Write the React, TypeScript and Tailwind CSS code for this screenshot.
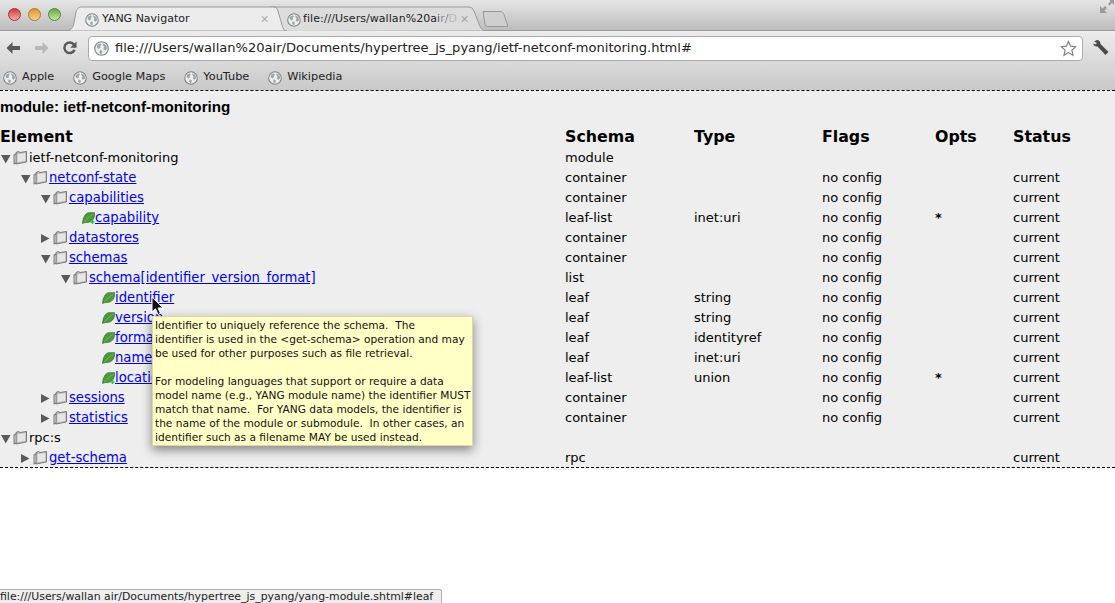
import React from 'react';

type Row = {
    name: string;
    level: number;
    kind: 'open' | 'closed' | 'leaf' | 'leaflist';
    link?: boolean;
    schema?: string;
    type?: string;
    flags?: string;
    opts?: string;
    status?: string;
};

const rows: Row[] = [
    { name: 'ietf-netconf-monitoring', level: 0, kind: 'open', schema: 'module' },
    { name: 'netconf-state', level: 1, kind: 'open', link: true, schema: 'container', flags: 'no config', status: 'current' },
    { name: 'capabilities', level: 2, kind: 'open', link: true, schema: 'container', flags: 'no config', status: 'current' },
    { name: 'capability', level: 3, kind: 'leaflist', link: true, schema: 'leaf-list', type: 'inet:uri', flags: 'no config', opts: '*', status: 'current' },
    { name: 'datastores', level: 2, kind: 'closed', link: true, schema: 'container', flags: 'no config', status: 'current' },
    { name: 'schemas', level: 2, kind: 'open', link: true, schema: 'container', flags: 'no config', status: 'current' },
    { name: 'schema[identifier version format]', level: 3, kind: 'open', link: true, schema: 'list', flags: 'no config', status: 'current' },
    { name: 'identifier', level: 4, kind: 'leaf', link: true, schema: 'leaf', type: 'string', flags: 'no config', status: 'current' },
    { name: 'version', level: 4, kind: 'leaf', link: true, schema: 'leaf', type: 'string', flags: 'no config', status: 'current' },
    { name: 'format', level: 4, kind: 'leaf', link: true, schema: 'leaf', type: 'identityref', flags: 'no config', status: 'current' },
    { name: 'namespace', level: 4, kind: 'leaf', link: true, schema: 'leaf', type: 'inet:uri', flags: 'no config', status: 'current' },
    { name: 'location', level: 4, kind: 'leaflist', link: true, schema: 'leaf-list', type: 'union', flags: 'no config', opts: '*', status: 'current' },
    { name: 'sessions', level: 2, kind: 'closed', link: true, schema: 'container', flags: 'no config', status: 'current' },
    { name: 'statistics', level: 2, kind: 'closed', link: true, schema: 'container', flags: 'no config', status: 'current' },
    { name: 'rpc:s', level: 0, kind: 'open' },
    { name: 'get-schema', level: 1, kind: 'closed', link: true, schema: 'rpc', status: 'current' },
];

const Globe = ({ size = 14 }: { size?: number }) => (
    <svg width={size} height={size} viewBox="0 0 16 16" className="shrink-0">
        <circle cx="8" cy="8" r="7.2" fill="#eceff0" stroke="#808284" strokeWidth="1.2" />
        <path d="M3 4.5 6.5 2.5 8 4 6.5 5.5 7 7 4.8 8.5 3.2 7ZM9.5 2.5 13 4.5 14 8 12 10 10 8.8 10.8 6 9.5 4.5ZM6.5 9.5 9 10.5 8.6 13 7 14 5.8 12Z" fill="#a3a6a9" />
    </svg>
);

const Folder = () => (
    <svg width="14" height="14" viewBox="0 0 14 14" className="shrink-0">
        <path d="M0.5 3.5 3 2.500V13L0.5 13.500Z" fill="#808080" />
        <path d="M3 1.500 5.500 0.500 7 1.500 13.500 0.500V11L3 13Z" fill="#bdbdbd" stroke="#6e6e6e" strokeWidth="0.9" />
        <path d="M4.500 3.200 12.300 2V9.800L4.500 11.200Z" fill="#e6e6e6" />
        <path d="M1.500 4.500 2.800 4V11.500L1.500 12Z" fill="#c4c4c4" />
    </svg>
);

const Leaf = ({ plus }: { plus?: boolean }) => (
    <svg width="13" height="12" viewBox="0 0 13 12" className="shrink-0">
        <path d="M0.5 11.500C1 6 3 1 7 0.700H12.800C12.800 6 10.500 10.500 4.500 10.500 2.800 10.500 1.800 10.800 0.500 11.500Z" fill="#4c9a3c" stroke="#2d6b2a" strokeWidth="0.7" />
        <path d="M2.500 10C5 7 7.500 4.500 11.500 2" fill="none" stroke="#82c464" strokeWidth="0.7" />
        {plus && <path d="M10.500 8V12M8.500 10H12.500" stroke="#1fcf3f" strokeWidth="1.5" />}
    </svg>
);

const Arrow = ({ open }: { open: boolean }) => (
    <svg width="12" height="12" viewBox="0 0 12 12" className="shrink-0">
        {open ? <path d="M1 3H10.500L5.750 11.500Z" fill="#5a5a5a" /> : <path d="M1 2 9.500 6.500 1 11Z" fill="#5a5a5a" />}
    </svg>
);

const Bookmark = ({ label }: { label: string }) => (
    <div className="flex items-center gap-[5px]">
        <Globe />
        <span>{label}</span>
    </div>
);

const TreeRow = ({ row }: { row: Row }) => {
    const isLeaf = row.kind === 'leaf' || row.kind === 'leaflist';
    return (
        <div className="flex h-5 items-center">
            <div
                className="flex w-[565px] items-center overflow-hidden"
                style={{ paddingLeft: row.level * 20 + (isLeaf ? 22 : 0) }}>
                {isLeaf ? (
                    <Leaf plus={row.kind === 'leaflist'} />
                ) : (
                    <>
                        <Arrow open={row.kind === 'open'} />
                        <span className="ml-px">
                            <Folder />
                        </span>
                        <span className="w-[2px]" />
                    </>
                )}
                {row.link ? (
                    <a className="text-[13.2px] text-[#0000ee] underline [word-spacing:2.5px]">{row.name}</a>
                ) : (
                    <span>{row.name}</span>
                )}
            </div>
            <div className="w-[129px]">{row.schema}</div>
            <div className="w-[128px]">{row.type}</div>
            <div className="w-[113px]">{row.flags}</div>
            <div className="w-[78px] font-bold">{row.opts}</div>
            <div>{row.status}</div>
        </div>
    );
};

export default function App() {
    return (
        <div className="relative h-[603px] w-[1115px] overflow-hidden bg-white font-['DejaVu_Sans',sans-serif] text-black">
            {/* browser chrome */}
            <div className="relative h-[31px] border-b border-[#9a9a9a] bg-gradient-to-b from-[#e6e6e6] to-[#bdbdbd]">
                <div className="flex items-center gap-[7px] pl-[8px] pt-[8px]">
                    <span className="h-[13px] w-[13px] rounded-full border border-[#a33] bg-gradient-to-b from-[#cf3a42] to-[#f6a6a6]" />
                    <span className="h-[13px] w-[13px] rounded-full border border-[#b07a20] bg-gradient-to-b from-[#dc9428] to-[#f8d488]" />
                    <span className="h-[13px] w-[13px] rounded-full border border-[#4a8a30] bg-gradient-to-b from-[#68a848] to-[#c4eaa4]" />
                </div>
                {/* second tab sits under the active one */}
                <div className="absolute left-[270px] top-[6px] flex h-[25px] w-[218px] items-center pt-[2px]">
                    <svg width="218" height="25" viewBox="0 0 218 25" className="absolute inset-0">
                        <path d="M0 25V1H198C201 1 203 2 204 5L209 18C210.500 22 212 24.500 216 24.500" fill="#dcdcdc" stroke="#9a9a9a" />
                    </svg>
                    <span className="relative ml-[17px] flex items-center gap-[2px] text-[11px] tracking-[0.05px] whitespace-nowrap text-[#222]">
                        <Globe />
                        <span>
                            file:///Users/wallan%20a<span className="text-[#555]">i</span>
                            <span className="text-[#888]">r/</span>
                            <span className="text-[#bbb]">D</span>
                        </span>
                    </span>
                    <span className="absolute left-[190px] top-[6px] text-[11px] font-bold text-[#a8a8a8]">✕</span>
                </div>
                <div className="absolute left-[65px] top-[6px] flex h-[25px] w-[222px] items-center pt-[2px]">
                    <svg width="222" height="25" viewBox="0 0 222 25" className="absolute inset-0">
                        <path d="M0 25C6 25 8 22 9 17L11 6C12 2 14 1 17 1H208C211 1 212 2 213 5L217 19C218.500 23 219 25 222 25Z" fill="#ececec" stroke="#9a9a9a" />
                    </svg>
                    <span className="relative ml-[20px] flex items-center gap-[3px] text-[11px] text-[#222]">
                        <Globe />
                        <span>YANG Navigator</span>
                    </span>
                    <span className="absolute left-[195px] top-[6px] text-[11px] font-bold text-[#b0b0b0]">✕</span>
                </div>
                <svg width="28" height="18" viewBox="0 0 28 18" className="absolute left-[482px] top-[10px]">
                    <path d="M1 1.500H18C20 1.500 21 2.500 22 4.500L26 16.500H6C4 16.500 3.500 15.500 3 14Z" fill="#cfcfcf" stroke="#989898" />
                </svg>
                <svg width="16" height="16" viewBox="0 0 16 16" className="absolute right-0 top-0">
                    <path d="M1 13V6L3.500 8.500 6 6 8 8 5.500 10.500 8 13ZM15 0V5L13 3 10.500 5.500 9 4 11.500 1.500 10.500 0Z" fill="#9a9a9a" />
                </svg>
            </div>
            <div className="h-[59px] bg-gradient-to-b from-[#ececec] to-[#c9c9c9]">
                <div className="flex h-[34px] items-center">
                    <svg width="14" height="14" viewBox="0 0 14 14" className="ml-[6px] shrink-0">
                        <path d="M6.500 1 0.500 7 6.500 13V9H14V5H6.500Z" fill="#585858" />
                    </svg>
                    <svg width="14" height="14" viewBox="0 0 14 14" className="ml-[15px] shrink-0">
                        <path d="M7.500 1 13.500 7 7.500 13V9H0V5H7.500Z" fill="#b8b8b8" />
                    </svg>
                    <svg width="14" height="14" viewBox="0 0 16 16" className="ml-[14px] shrink-0">
                        <path d="M13.200 10A6 6 0 1 1 12.500 4.200" fill="none" stroke="#585858" strokeWidth="2.800" />
                        <path d="M15.500 0.500V7.800H8.200Z" fill="#585858" />
                    </svg>
                    <div className="ml-[11px] flex h-[25px] w-[995px] shrink-0 items-center rounded-[4px] border border-[#aaaaaa] bg-white pl-[5px] text-[13.05px] text-[#222]">
                        <Globe size={15} />
                        <span className="ml-[6px] grow whitespace-nowrap">
                            file:///Users/wallan%20air/Documents/hypertree_js_pyang/ietf-netconf-monitoring.html#
                        </span>
                        <svg width="17" height="17" viewBox="0 0 17 17" className="mr-[5px] shrink-0">
                            <path d="M8.500 1.500 10.600 6.200 15.700 6.700 11.900 10.100 13 15.200 8.500 12.600 4 15.200 5.100 10.100 1.300 6.700 6.400 6.200Z" fill="#fff" stroke="#808080" strokeWidth="1.200" />
                        </svg>
                    </div>
                    <svg width="18" height="18" viewBox="0 0 18 18" className="ml-[9px] shrink-0">
                        <path d="M2 2.500 5 1C7 1 8.500 2.500 8.300 4.800L16.500 13 13.500 16 5.500 7.500C3.500 8 1.500 6.500 1 4.500L3.500 5.500 5 4Z" fill="#4a4a4a" />
                    </svg>
                </div>
                <div className="flex h-[25px] items-center gap-[19px] pl-[3px] text-[11.3px] text-[#222]">
                    <Bookmark label="Apple" />
                    <Bookmark label="Google Maps" />
                    <Bookmark label="YouTube" />
                    <Bookmark label="Wikipedia" />
                </div>
            </div>

            {/* page */}
            <div className="h-[378px] border-y border-dashed border-black bg-[#eeeeee] text-[13px]">
                <div className="pt-[7px] font-['Liberation_Sans',sans-serif] text-[15.2px] leading-[18px] font-bold whitespace-nowrap">
                    module: ietf-netconf-monitoring
                </div>
                <div className="mt-[11px] mb-px flex h-5 items-center text-[15.8px] font-bold">
                    <div className="w-[565px]">Element</div>
                    <div className="w-[129px]">Schema</div>
                    <div className="w-[128px]">Type</div>
                    <div className="w-[113px]">Flags</div>
                    <div className="w-[78px]">Opts</div>
                    <div>Status</div>
                </div>
                {rows.map((row) => (
                    <TreeRow key={row.name} row={row} />
                ))}
            </div>

            {/* tooltip */}
            <div className="absolute left-[152px] top-[316px] h-[130px] w-[321px] border border-[#d8d8a8] bg-[#ffffc6] pl-[2px] pt-[1px] text-[10.6px] leading-[14px] whitespace-pre text-[#111] shadow-[0_4px_10px_rgba(0,0,0,0.45)]">
                {'Identifier to uniquely reference the schema.  The\nidentifier is used in the <get-schema> operation and may\nbe used for other purposes such as file retrieval.\n\nFor modeling languages that support or require a data\nmodel name (e.g., YANG module name) the identifier MUST\nmatch that name.  For YANG data models, the identifier is\nthe name of the module or submodule.  In other cases, an\nidentifier such as a filename MAY be used instead.'}
            </div>

            {/* cursor */}
            <svg width="14" height="20" viewBox="0 0 14 20" className="absolute left-[151px] top-[296px]">
                <path d="M1 1V16L4.500 12.800 7 18.500 9.500 17.400 7 12H12Z" fill="#111" stroke="#fff" strokeWidth="1" />
            </svg>

            {/* status bubble */}
            <div className="absolute bottom-0 left-0 h-[14px] w-[442px] rounded-tr-[3px] border-t border-r border-[#b0b0b0] bg-[#eeeeee] text-[10.9px] leading-[14px] whitespace-nowrap text-[#222]">
                file:///Users/wallan air/Documents/hypertree_js_pyang/yang-module.shtml#leaf
            </div>
        </div>
    );
}
